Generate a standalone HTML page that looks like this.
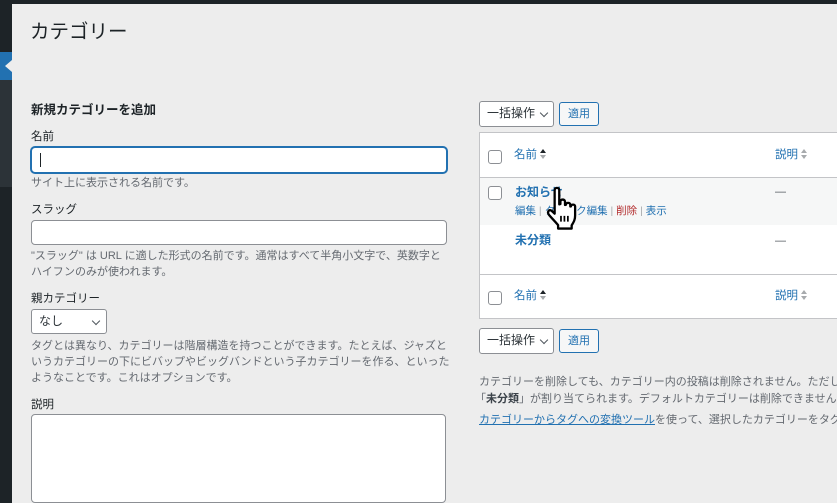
<!DOCTYPE html>
<html><head><meta charset="utf-8"><style>
*{margin:0;padding:0;box-sizing:border-box}
body{width:837px;height:503px;overflow:hidden;background:#ededed;font-family:"Liberation Sans","Noto Sans CJK JP",sans-serif;color:#3c434a;position:relative;font-size:11px}
.a{position:absolute;white-space:nowrap;line-height:16px}
.box{position:absolute;background:#fff;border:1px solid #8c8f94;border-radius:4px}
.lk{color:#2271b1}
.hint{color:#646970}
.cb{position:absolute;width:14px;height:14px;border:1px solid #8c8f94;border-radius:3px;background:#fff}
.btn{position:absolute;border:1px solid #2271b1;border-radius:3px;background:#f6f7f7;color:#2271b1;font-size:11px;text-align:center;line-height:22px}
.sel{position:absolute;background:#fff;border:1px solid #8c8f94;border-radius:3px;font-size:12px;line-height:23px;padding-left:7px;color:#2c3338}
.arr{position:absolute;right:7px;top:8px;width:6px;height:6px;border-right:1.3px solid #50575e;border-bottom:1.3px solid #50575e;transform:rotate(45deg)}
.sort{display:inline-block;vertical-align:middle;margin-left:3px;width:7px;height:11px;position:relative}
.sort:before{content:"";position:absolute;left:0;top:0;border-left:3.5px solid transparent;border-right:3.5px solid transparent;border-bottom:4.5px solid #1d2327}
.sort:after{content:"";position:absolute;left:0;top:6px;border-left:3.5px solid transparent;border-right:3.5px solid transparent;border-top:4.5px solid #a7aaad}
.sort.g:before{border-bottom-color:#a7aaad}
</style></head><body>
<div style="position:absolute;left:0;top:0;width:837px;height:4px;background:#1d2327"></div>
<div style="position:absolute;left:0;top:0;width:12px;height:503px;background:#1d2327"></div>
<div style="position:absolute;left:0;top:52px;width:12px;height:28px;background:#2271b1"></div>
<div style="position:absolute;left:0;top:80px;width:12px;height:107px;background:#2c3338"></div>
<div style="position:absolute;left:5px;top:60px;border-top:6px solid transparent;border-bottom:6px solid transparent;border-right:7px solid #ededed"></div>

<div class="a" style="left:30px;top:19px;font-size:19.5px;line-height:26px;color:#1d2327">カテゴリー</div>
<div class="a" style="left:31px;top:102px;font-size:12.5px;font-weight:bold;color:#1d2327">新規カテゴリーを追加</div>
<div class="a" style="left:31px;top:129px;font-size:11.5px;color:#1d2327">名前</div>
<div class="box" style="left:31px;top:147px;width:416px;height:26px;border-color:#2271b1;box-shadow:0 0 0 1px #2271b1"><div style="position:absolute;left:8px;top:5px;width:1px;height:14px;background:#1d2327"></div></div>
<div class="a hint" style="left:31px;top:175px">サイト上に表示される名前です。</div>
<div class="a" style="left:31px;top:202px;font-size:11.5px;color:#1d2327">スラッグ</div>
<div class="box" style="left:31px;top:220px;width:416px;height:25px"></div>
<div class="a hint" style="left:31px;top:248px">"スラッグ" は URL に適した形式の名前です。通常はすべて半角小文字で、英数字と</div>
<div class="a hint" style="left:31px;top:264px">ハイフンのみが使われます。</div>
<div class="a" style="left:31px;top:291px;font-size:11.5px;color:#1d2327">親カテゴリー</div>
<div class="sel" style="left:31px;top:309px;width:76px;height:25px">なし<div class="arr"></div></div>
<div class="a hint" style="left:31px;top:338px">タグとは異なり、カテゴリーは階層構造を持つことができます。たとえば、ジャズと</div>
<div class="a hint" style="left:31px;top:354px">いうカテゴリーの下にビバップやビッグバンドという子カテゴリーを作る、といった</div>
<div class="a hint" style="left:31px;top:370px">ようなことです。これはオプションです。</div>
<div class="a" style="left:31px;top:397px;font-size:11.5px;color:#1d2327">説明</div>
<div class="box" style="left:31px;top:414px;width:415px;height:89px"></div>

<div class="sel" style="left:479px;top:101px;width:75px;height:26px">一括操作<div class="arr" style="right:6px"></div></div>
<div class="btn" style="left:559px;top:102px;width:40px;height:24px">適用</div>

<div style="position:absolute;left:479px;top:132px;width:370px;height:187px;background:#fff;border:1px solid #c3c4c7"></div>
<div style="position:absolute;left:480px;top:177px;width:360px;height:1px;background:#c3c4c7"></div>
<div style="position:absolute;left:480px;top:178px;width:360px;height:47px;background:#f6f7f7"></div>
<div style="position:absolute;left:480px;top:274px;width:360px;height:1px;background:#c3c4c7"></div>

<div class="cb" style="left:488px;top:150px"></div>
<div class="a lk" style="left:514px;top:147px;font-size:11.5px">名前<span class="sort"></span></div>
<div class="a lk" style="left:775px;top:147px;font-size:11.5px">説明<span class="sort g"></span></div>

<div class="cb" style="left:488px;top:186px"></div>
<div class="a" style="left:515px;top:184px;font-size:12px;font-weight:bold;color:#2271b1">お知らせ</div>
<div class="a" style="left:515px;top:203px;font-size:10.5px"><span class="lk">編集</span> <span style="color:#a7aaad">|</span> <span class="lk">クイック編集</span> <span style="color:#a7aaad">|</span> <span style="color:#b32d2e">削除</span> <span style="color:#a7aaad">|</span> <span class="lk">表示</span></div>
<div class="a" style="left:775px;top:184px;color:#50575e">—</div>
<div class="a" style="left:515px;top:232px;font-size:12px;font-weight:bold;color:#2271b1">未分類</div>
<div class="a" style="left:775px;top:233px;color:#50575e">—</div>

<div class="cb" style="left:488px;top:291px"></div>
<div class="a lk" style="left:514px;top:288px;font-size:11.5px">名前<span class="sort"></span></div>
<div class="a lk" style="left:775px;top:288px;font-size:11.5px">説明<span class="sort g"></span></div>

<svg style="position:absolute;left:544px;top:186px" width="42" height="46" viewBox="0 0 36 40">
<path d="M9 3.5c0-2.5 4-2.5 4 0V16l1-.3V13.5c0-2.3 4-2.3 4 0v3l.8-.2c0-2.2 3.8-2.2 3.8 0v1.5l.6-.1c0-2 3.6-2 3.6 0v8c0 4-1.5 6-3 8.5V37H12v-3C10 31.5 6 27.5 4 25c-1.6-2.2-.3-4.8 2.2-3.6L9 24z" fill="#fff" stroke="#000" stroke-width="2" stroke-linejoin="round"/>
<path d="M14.5 26v5M17.5 26v5M20.5 26v5" stroke="#000" stroke-width="1.5"/>
</svg>

<div class="sel" style="left:479px;top:328px;width:75px;height:26px">一括操作<div class="arr" style="right:6px"></div></div>
<div class="btn" style="left:559px;top:329px;width:40px;height:24px">適用</div>

<div class="a hint" style="left:479px;top:374px">カテゴリーを削除しても、カテゴリー内の投稿は削除されません。ただし</div>
<div class="a hint" style="left:475px;top:391px">「<b style="color:#3c434a">未分類</b>」が割り当てられます。デフォルトカテゴリーは削除できません。</div>
<div class="a hint" style="left:479px;top:412px"><span class="lk" style="text-decoration:underline">カテゴリーからタグへの変換ツール</span>を使って、選択したカテゴリーをタグ</div>
</body></html>
